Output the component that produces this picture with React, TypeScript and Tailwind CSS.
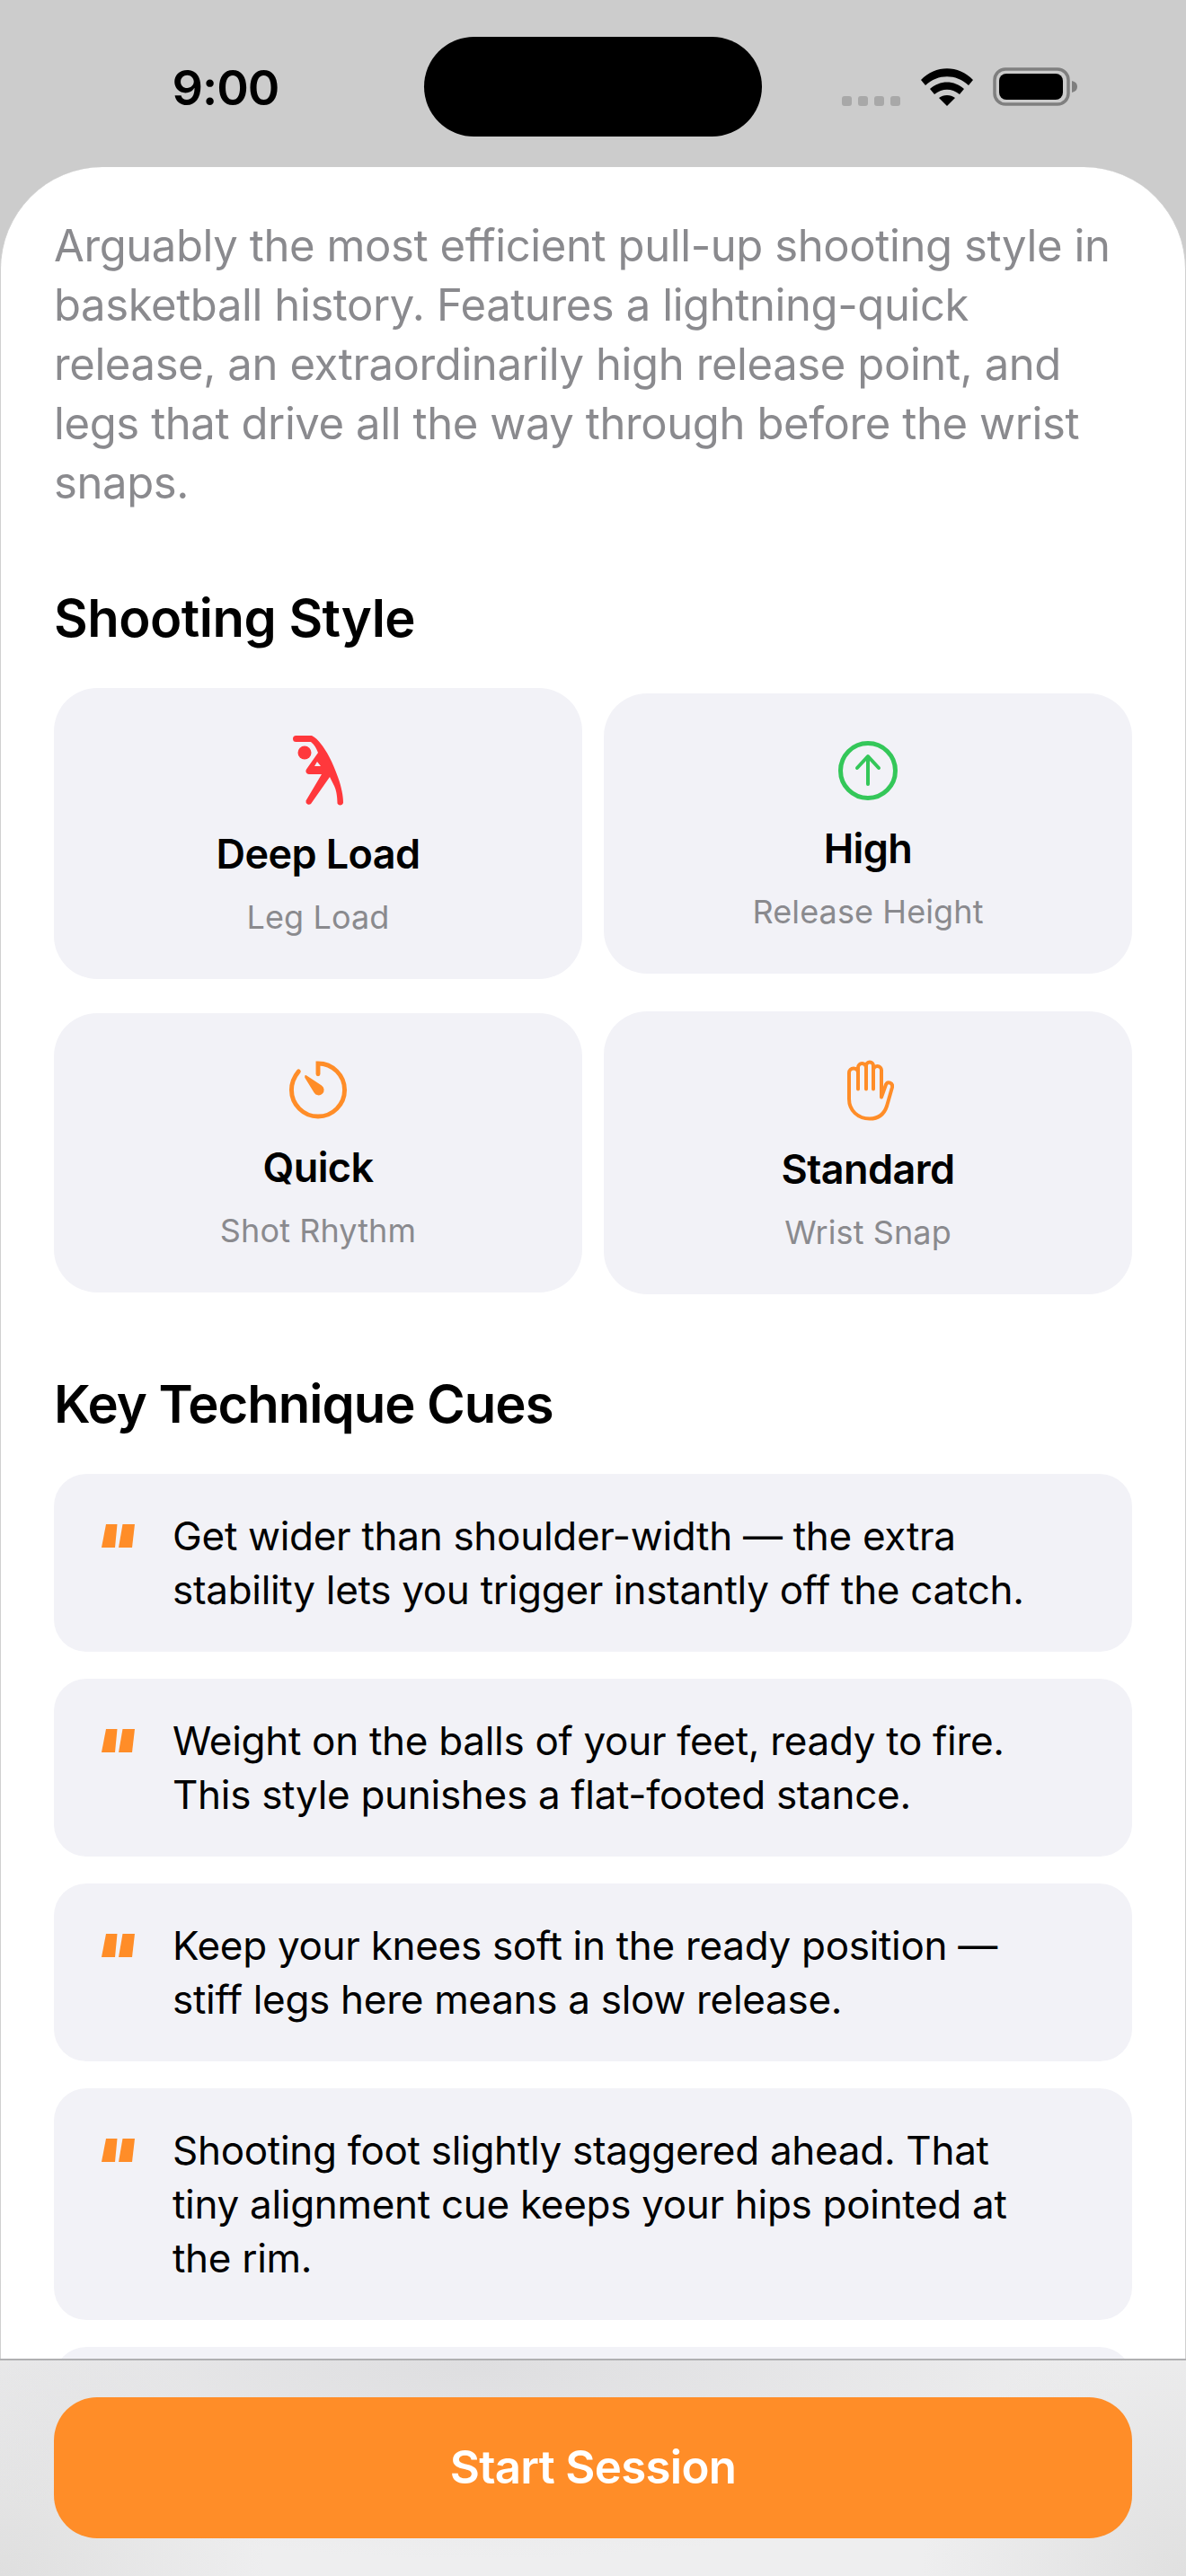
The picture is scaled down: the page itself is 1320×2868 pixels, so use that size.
import React from "react";

const orange = "#ff8d28";

function Figure() {
  return (
    <svg width="56" height="78" viewBox="0 0 56 78" fill="none">
      <circle cx="13" cy="19" r="7.500" fill="#ff383c" />
      <path
        fillRule="evenodd"
        fill="#ff383c"
        d="M3.500 0 H21 C25 2 28 5 31 9 C37 16 45 31 50 46 C54 57 56 67 56 75 A3.500 3.500 0 0 1 49.500 75.500 C49.500 67 48 60 46 56 L41 46 L20 76 A3.500 3.500 0 0 1 14.500 72.500 L32 43 H18 A3.500 3.500 0 0 1 15 37.500 L28 19 C26 14 24 10 20 7 H3.500 A3.500 3.500 0 0 1 3.500 0 Z M27 29 L24 34 H31 Z"
      />
    </svg>
  );
}

function ArrowCircle() {
  return (
    <svg width="66" height="66" viewBox="0 0 66 66" fill="none" stroke="#34c759" strokeLinecap="round" strokeLinejoin="round">
      <circle cx="33" cy="33" r="30.500" strokeWidth="5" />
      <path d="M33 48 V18 M21 30 L33 17 L45 30" strokeWidth="4" />
    </svg>
  );
}

function Timer() {
  return (
    <svg width="66" height="65" viewBox="0 0 66 66" fill="none">
      <path d="M33 15 V3 C49.500 3 63 16.500 63 33 C63 49.500 49.500 63 33 63 C16.500 63 3 49.500 3 33 C3 25 6 18 11 12" stroke={orange} strokeWidth="5" strokeLinecap="round" />
      <path d="M18 17 C18.500 16 19.500 16 20.500 17 L37 28 A6 6 0 1 1 28.500 36 L18 19 Z" fill={orange} />
    </svg>
  );
}

function Hand() {
  return (
    <svg className="ml-[5px]" width="52" height="69" viewBox="0 0 52 68" fill="none" stroke={orange} strokeWidth="4" strokeLinecap="round" strokeLinejoin="round">
      <path d="M12 33 V15 A5 5 0 0 0 2 15 V44 C2 57 12 66 25 66 C35 66 41 61 44 52 L50 31 C51 26 45 24 43 28 L38 42 V12 A4.500 4.500 0 0 0 29 12 V33 M29 33 V7 A4 4 0 0 0 21 7 V33 M21 33 V9 A4.500 4.500 0 0 0 12 9 V15" />
    </svg>
  );
}

function StatCard({ icon, title, sub }: { icon: React.ReactNode; title: string; sub: string }) {
  return (
    <div className="flex flex-col items-center rounded-[48px] bg-[#f2f2f7] pt-[53px] pb-[47px]">
      {icon}
      <div className="mt-[26px] text-[45px] leading-[56px] font-semibold tracking-[-0.6px] text-black">{title}</div>
      <div className="mt-[20px] text-[36px] leading-[44px] tracking-[0.1px] text-[#8a8a8e]">{sub}</div>
    </div>
  );
}

function Cue({ children }: { children: React.ReactNode }) {
  return (
    <div className="flex rounded-[36px] bg-[#f2f2f7] py-[39px] pr-[100px] pl-[53px] text-[44px] leading-[60px] tracking-[-0.3px] text-black">
      <div className="w-[79px] shrink-0 pt-[17px]">
        <svg width="37" height="26" viewBox="0 0 37 26" fill={orange}>
          <path d="M5 0 H17.500 L15 26 H0 Z" />
          <path d="M23.500 0 H37 L34 26 H19 Z" />
        </svg>
      </div>
      <div>{children}</div>
    </div>
  );
}

export default function App() {
  return (
    <div className="flex h-[2868px] w-[1320px] flex-col overflow-hidden bg-[#cccccc] font-['Inter','Liberation_Sans',sans-serif]">
      {/* status bar */}
      <div className="grid h-[186px] shrink-0 grid-cols-[472px_376px_472px] items-start pt-[41px]">
        <div className="pt-[24px] pl-[30px] text-center text-[54px] leading-[66px] font-semibold tracking-[-1px] text-black">9:00</div>
        <div className="h-[111px] rounded-full bg-black" />
        <div className="flex items-end pt-[34px] pl-[89px]">
          <div className="flex items-center gap-[7px]">
            <span className="h-[11px] w-[11px] rounded-[3px] bg-[#a8a8a8]" />
            <span className="h-[11px] w-[11px] rounded-[3px] bg-[#a8a8a8]" />
            <span className="h-[11px] w-[11px] rounded-[3px] bg-[#a8a8a8]" />
            <span className="h-[11px] w-[11px] rounded-[3px] bg-[#a8a8a8]" />
          </div>
          <svg className="ml-[23px]" width="58" height="42" viewBox="0 0 58 42" fill="#000">
            <path d="M0 13 C16 -4 42 -4 58 13 L53 19 C39 6 19 6 5 19 Z" />
            <path d="M10 23 C21 13 37 13 48 23 L43 29 C34 22 24 22 15 29 Z" />
            <path d="M20 33 C25 29 33 29 38 33 L29 42 Z" />
          </svg>
          <svg className="ml-[22px]" width="94" height="43" viewBox="0 0 94 43" fill="none">
            <rect x="2" y="2" width="82" height="39" rx="12" stroke="#7f7f7f" strokeWidth="3.500" />
            <rect x="7" y="7" width="71" height="29" rx="8" fill="#000" />
            <path d="M88 15 C92 16 94 18 94 21.500 C94 25 92 27 88 28 Z" fill="#7f7f7f" />
          </svg>
        </div>
      </div>

      {/* scrolling sheet */}
      <div className="min-h-0 flex-1 overflow-hidden rounded-t-[114px] border-x border-[#d0d0d0] bg-white px-[59px] pt-[55px]">
        <p className="text-[49px] leading-[66px] tracking-[-0.4px] text-[#8a8a8e]">
          Arguably the most efficient pull-up shooting style in basketball history. Features a lightning-quick release, an extraordinarily high release point, and legs that drive all the way through before the wrist snaps.
        </p>

        <h2 className="mt-[81px] text-[58px] leading-[72px] font-semibold tracking-[-0.5px] text-black">Shooting Style</h2>
        <div className="mt-[42px] grid grid-cols-2 items-center gap-x-[24px] gap-y-[36px]">
          <StatCard icon={<Figure />} title="Deep Load" sub="Leg Load" />
          <StatCard icon={<ArrowCircle />} title="High" sub="Release Height" />
          <StatCard icon={<Timer />} title="Quick" sub="Shot Rhythm" />
          <StatCard icon={<Hand />} title="Standard" sub="Wrist Snap" />
        </div>

        <h2 className="mt-[86px] text-[58px] leading-[72px] font-semibold tracking-[-1px] text-black">Key Technique Cues</h2>
        <div className="mt-[42px] flex flex-col gap-[30px]">
          <Cue>Get wider than shoulder-width — the extra stability lets you trigger instantly off the catch.</Cue>
          <Cue>Weight on the balls of your feet, ready to fire. This style punishes a flat-footed stance.</Cue>
          <Cue>Keep your knees soft in the ready position — stiff legs here means a slow release.</Cue>
          <Cue>Shooting foot slightly staggered ahead. That tiny alignment cue keeps your hips pointed at the rim.</Cue>
          <div className="h-[198px] shrink-0 rounded-[36px] bg-[#f2f2f7]" />
        </div>
      </div>

      {/* bottom action bar */}
      <div className="h-[242px] shrink-0 border-t-[2px] border-[#b0b0b2] bg-[radial-gradient(ellipse_at_40%_0%,#dedee0_0%,transparent_65%),radial-gradient(circle_at_0%_100%,#dfdfdf_0%,transparent_22%),radial-gradient(circle_at_100%_100%,#e0e0e0_0%,transparent_22%),linear-gradient(#eeeeef,#eeeeef)] px-[60px] pt-[41px]">
        <button className="h-[157px] w-full rounded-[48px] bg-[#ff8d28] text-[51px] font-semibold tracking-[-0.7px] text-white">Start Session</button>
      </div>
    </div>
  );
}
